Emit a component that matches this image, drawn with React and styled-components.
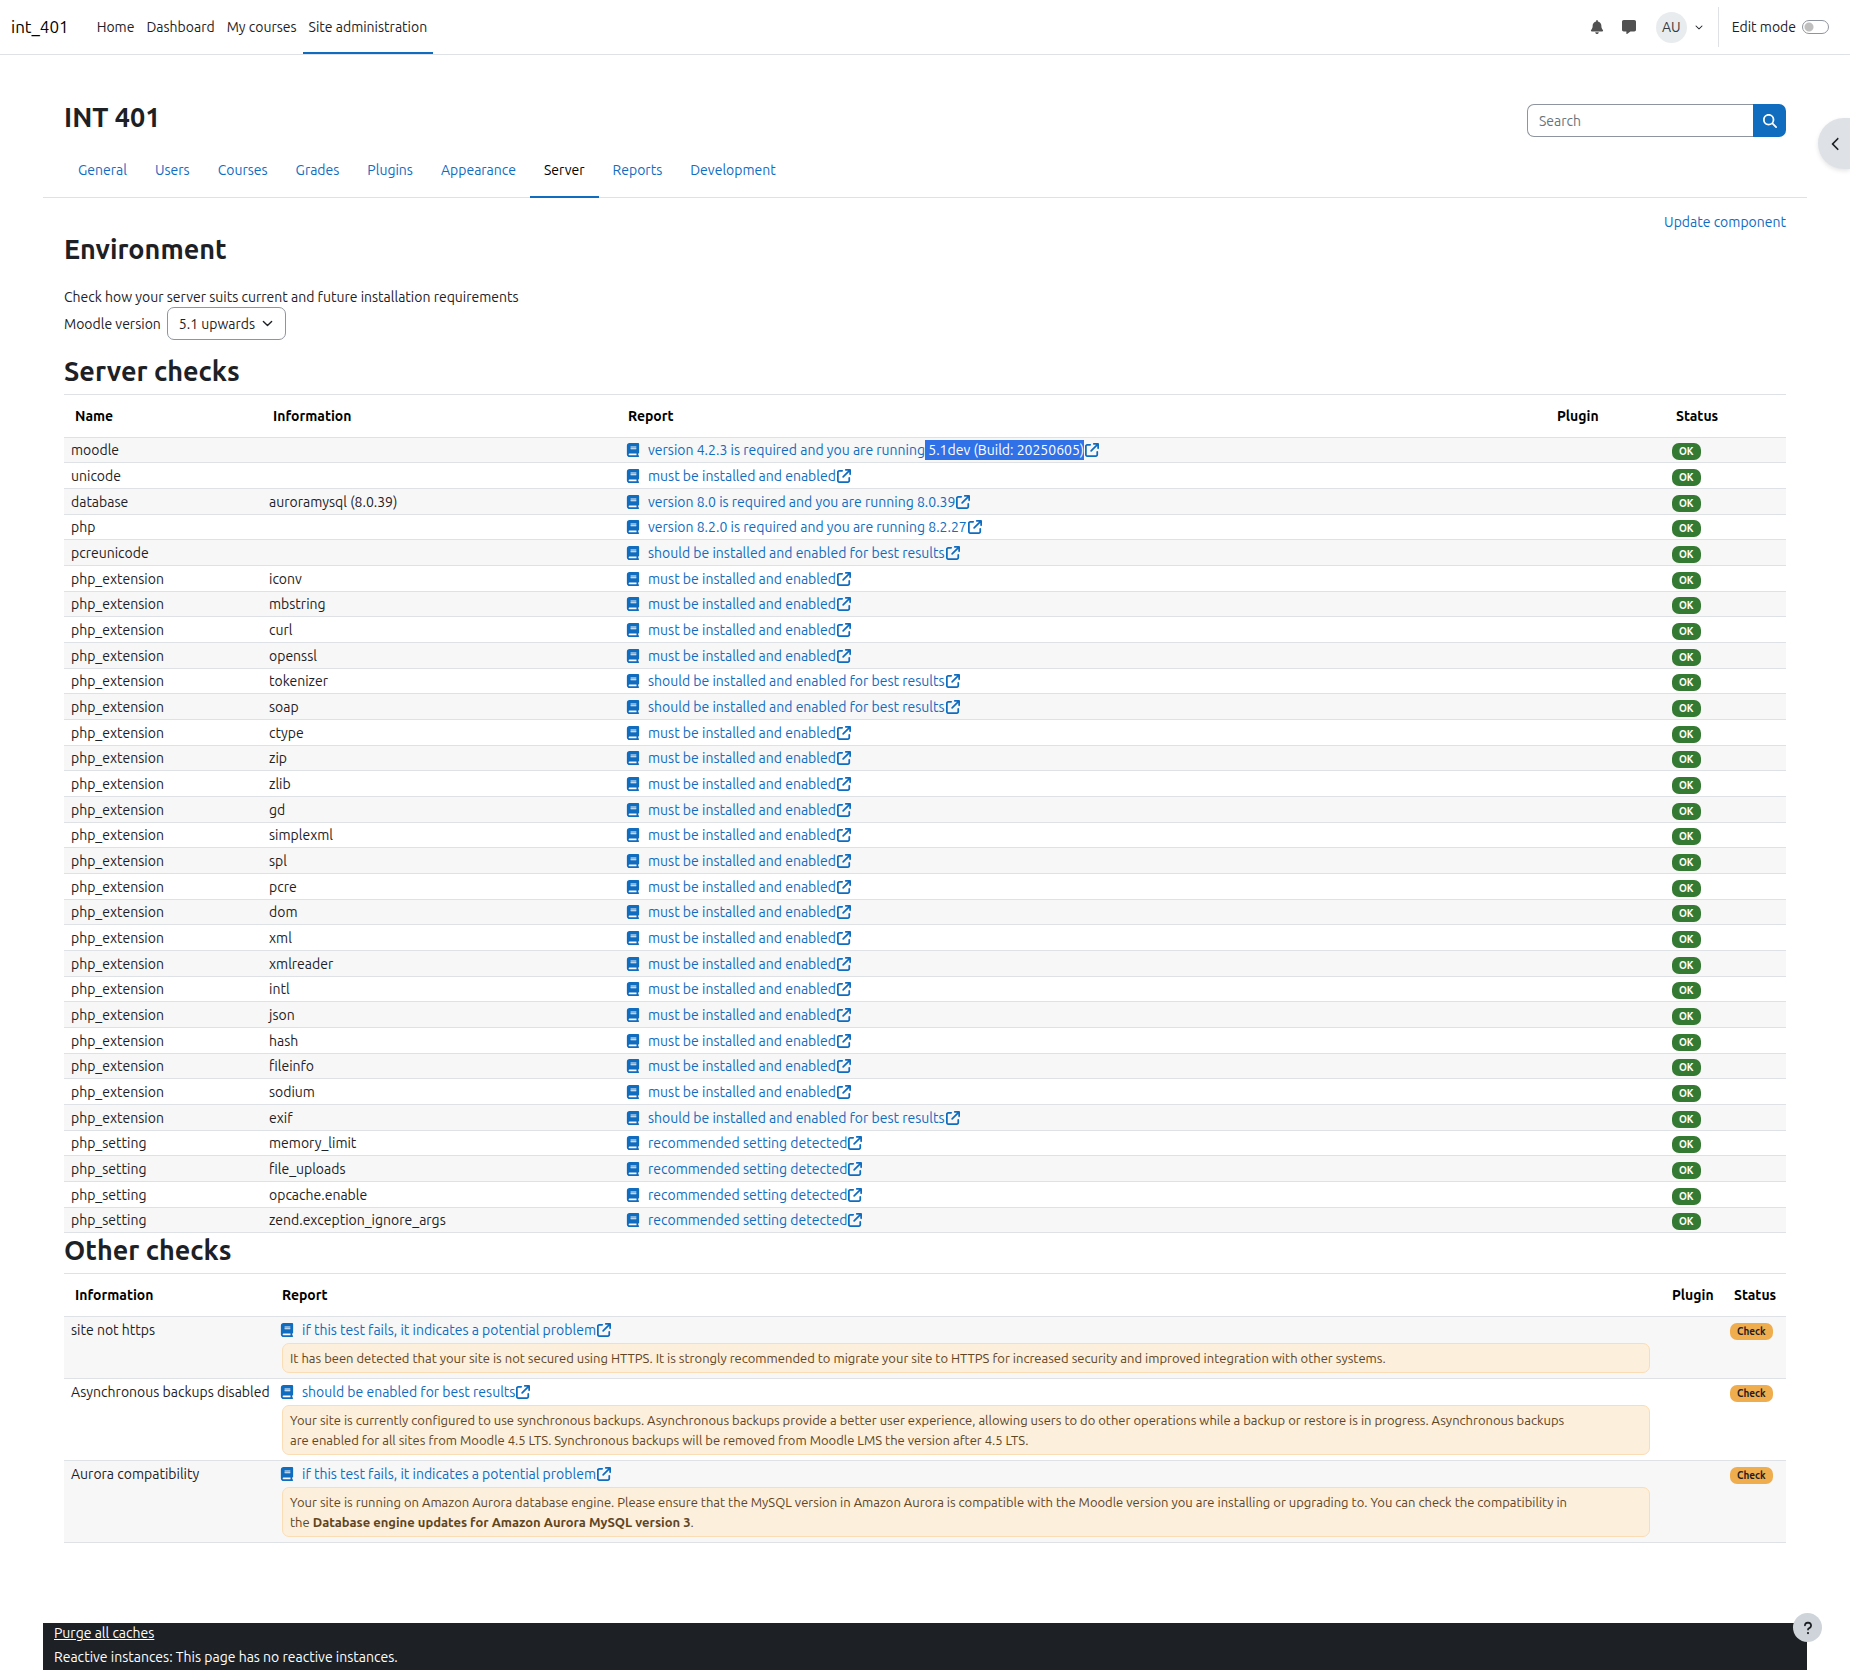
import React from 'react';
import styled, { createGlobalStyle } from 'styled-components';
import {
  FaArrowUpRightFromSquare,
  FaBell,
  FaBook,
  FaChevronDown,
  FaChevronLeft,
  FaMagnifyingGlass,
  FaMessage,
  FaQuestion,
} from 'react-icons/fa6';

const GlobalStyle = createGlobalStyle`
  * {
    box-sizing: border-box;
  }

  body {
    margin: 0;
    background: white;
    color: #1d2125;
    font-family: Ubuntu, "Noto Sans", "Open Sans", sans-serif;
    font-size: 14px;
    line-height: 20px;
  }

  button, input, select {
    font: inherit;
    color: inherit;
  }
`;

const Link = styled.a`
  color: #0f6cbf;
  text-decoration: none;
`;

const Navbar = styled.header`
  display: flex;
  align-items: stretch;
  height: 55px;
  padding: 0 21px 0 11px;
  border-bottom: 1px solid #dee2e6;
`;

const Brand = styled.a`
  align-self: center;
  margin-right: 22px;
  font-size: 17px;
  color: black;
  text-decoration: none;
`;

const PrimaryNav = styled.nav`
  display: flex;
`;

const PrimaryLink = styled.a`
  display: flex;
  align-items: center;
  padding: 2px 6px 0;
  border-bottom: 2px solid ${({ $active }) => ($active ? '#0f6cbf' : 'transparent')};
  color: #1d2125;
  text-decoration: none;
`;

const UserNav = styled.div`
  display: flex;
  align-items: center;
  margin-left: auto;
`;

const IconButton = styled.button`
  display: flex;
  justify-content: center;
  width: 32px;
  padding: 0;
  border: 0;
  background: none;
  color: #515151;
`;

const UserMenu = styled.button`
  display: flex;
  align-items: center;
  gap: 8px;
  margin: 0 15px 0 11px;
  padding: 0;
  border: 0;
  background: none;
`;

const Avatar = styled.span`
  width: 31px;
  border-radius: 50%;
  background: #e9ecef;
  color: #343a40;
  line-height: 31px;
  text-align: center;
`;

const EditMode = styled.label`
  display: flex;
  align-items: center;
  gap: 6px;
  height: 40px;
  padding-left: 13px;
  border-left: 1px solid #dee2e6;
`;

const Switch = styled.input`
  appearance: none;
  width: 27px;
  height: 14px;
  margin: 0;
  border: 1px solid #8f959e;
  border-radius: 7px;
  background: radial-gradient(circle at 6px 6px, #bfbfbf 4px, transparent 5px);
`;

const DrawerToggle = styled.button`
  position: absolute;
  top: 118px;
  right: 0;
  display: flex;
  align-items: center;
  width: 32px;
  height: 51px;
  padding: 0 0 0 11px;
  border: 0;
  border-radius: 26px 0 0 26px;
  background: #dee2e6;
  box-shadow: 0 2px 4px rgba(0, 0, 0, 0.1);
`;

const Page = styled.div`
  margin: 0 43px;
`;

const PageHeader = styled.div`
  display: flex;
  align-items: flex-start;
  justify-content: space-between;
  padding: 44px 21px 6px;
`;

const Title = styled.h1`
  margin: 0;
  font-size: 27px;
  font-weight: 700;
  line-height: 36px;
`;

const SearchForm = styled.form`
  display: flex;
  height: 33px;
  margin-top: 5px;
`;

const SearchInput = styled.input`
  width: 226px;
  padding: 0 11px;
  border: 1px solid #8f959e;
  border-right: 0;
  border-radius: 7px 0 0 7px;

  &::placeholder {
    color: #6a737b;
    opacity: 1;
  }
`;

const SearchButton = styled.button`
  display: flex;
  align-items: center;
  justify-content: center;
  width: 33px;
  padding: 0;
  border: 0;
  border-radius: 0 7px 7px 0;
  background: #0f6cbf;
  color: white;
`;

const Tabs = styled.nav`
  display: flex;
  height: 55px;
  padding: 0 21px;
  border-bottom: 1px solid #dee2e6;
`;

const Tab = styled(Link)`
  display: flex;
  align-items: center;
  height: 55px;
  padding: 0 14px;
  border-bottom: 2px solid ${({ $active }) => ($active ? '#0f6cbf' : 'transparent')};
  ${({ $active }) => $active && 'color: black;'}
`;

const Content = styled.main`
  padding: 14px 21px 80px;
`;

const Actions = styled.div`
  text-align: right;
`;

const Heading = styled.h2`
  margin: 0 0 6px;
  font-size: 27px;
  font-weight: 600;
  line-height: 34px;
`;

const Intro = styled.p`
  margin: 21px 0 0;
`;

const VersionForm = styled.form`
  display: flex;
  align-items: center;
  gap: 6px;
  margin-bottom: 14px;
`;

const SelectBox = styled.div`
  position: relative;

  svg {
    position: absolute;
    top: 11px;
    right: 13px;
    pointer-events: none;
  }
`;

const Select = styled.select`
  appearance: none;
  display: block;
  width: 119px;
  height: 33px;
  padding: 0 11px;
  border: 1px solid #8f959e;
  border-radius: 7px;
  background: white;
`;

const Table = styled.table`
  width: 100%;
  table-layout: fixed;
  border-spacing: 0;
  border-top: 1px solid #dee2e6;
`;

const HeadCell = styled.th`
  width: ${({ $width }) => $width || 'auto'};
  padding: 11px;
  border-bottom: 1px solid #dee2e6;
  color: black;
  font-weight: 700;
  text-align: left;
`;

const Cell = styled.td`
  padding: 3px 7px 2px;
  border-bottom: 1px solid #dee2e6;
  vertical-align: top;
  white-space: nowrap;
`;

const Row = styled.tr`
  background: ${({ $striped }) => ($striped ? '#f7f7f7' : 'white')};
`;

const ServerRow = styled(Row)`
  &:nth-child(3n + 1) ${Cell} {
    padding-top: 2px;
  }
`;

const Report = styled.div`
  display: flex;
  align-items: center;
`;

const DocIcon = styled(Link)`
  display: flex;
  justify-content: center;
  width: 18px;
  margin-right: 6px;
`;

const DocLink = styled(Link)`
  display: flex;
  align-items: center;
  gap: 1px;
  white-space: pre;
`;

const Selected = styled.span`
  padding: 2px 0;
  background: #3071e7;
  color: white;
`;

const Badge = styled.span`
  display: block;
  width: fit-content;
  margin-top: 3px;
  padding: 0 7px;
  border-radius: 7px;
  background: ${({ $warning }) => ($warning ? '#f0ad4e' : '#357a32')};
  color: ${({ $warning }) => ($warning ? '#1d2125' : 'white')};
  font-size: 10px;
  font-weight: 700;
  line-height: 17px;
`;

const Alert = styled.div`
  margin: 3px 4px;
  padding: 4px 74px 4px 7px;
  border: 1px solid #fbddb5;
  border-radius: 7px;
  background: #fcefdc;
  color: #60451f;
  font-size: 13px;
  white-space: normal;
`;

const Footer = styled.footer`
  position: relative;
  display: flex;
  flex-direction: column;
  gap: 4px;
  padding: 0 11px 3px;
  background: #1d2125;
  color: white;

  a {
    color: white;
    text-decoration: underline;
  }
`;

const HelpButton = styled.button`
  position: absolute;
  top: -10px;
  right: -15px;
  display: flex;
  align-items: center;
  justify-content: center;
  width: 29px;
  height: 29px;
  padding: 0;
  border: 0;
  border-radius: 50%;
  background: #ced4da;
  color: #1d2125;
`;

const tabs = ['General', 'Users', 'Courses', 'Grades', 'Plugins', 'Appearance', 'Server', 'Reports', 'Development'];

const MUST = 'must be installed and enabled';
const SHOULD = 'should be installed and enabled for best results';
const SETTING = 'recommended setting detected';

const serverChecks = [
  ['moodle', '', 'version 4.2.3 is required and you are running', ' 5.1dev (Build: 20250605)'],
  ['unicode', '', MUST],
  ['database', 'auroramysql (8.0.39)', 'version 8.0 is required and you are running 8.0.39'],
  ['php', '', 'version 8.2.0 is required and you are running 8.2.27'],
  ['pcreunicode', '', SHOULD],
  ['php_extension', 'iconv', MUST],
  ['php_extension', 'mbstring', MUST],
  ['php_extension', 'curl', MUST],
  ['php_extension', 'openssl', MUST],
  ['php_extension', 'tokenizer', SHOULD],
  ['php_extension', 'soap', SHOULD],
  ['php_extension', 'ctype', MUST],
  ['php_extension', 'zip', MUST],
  ['php_extension', 'zlib', MUST],
  ['php_extension', 'gd', MUST],
  ['php_extension', 'simplexml', MUST],
  ['php_extension', 'spl', MUST],
  ['php_extension', 'pcre', MUST],
  ['php_extension', 'dom', MUST],
  ['php_extension', 'xml', MUST],
  ['php_extension', 'xmlreader', MUST],
  ['php_extension', 'intl', MUST],
  ['php_extension', 'json', MUST],
  ['php_extension', 'hash', MUST],
  ['php_extension', 'fileinfo', MUST],
  ['php_extension', 'sodium', MUST],
  ['php_extension', 'exif', SHOULD],
  ['php_setting', 'memory_limit', SETTING],
  ['php_setting', 'file_uploads', SETTING],
  ['php_setting', 'opcache.enable', SETTING],
  ['php_setting', 'zend.exception_ignore_args', SETTING],
];

const otherChecks = [
  {
    info: 'site not https',
    report: 'if this test fails, it indicates a potential problem',
    feedback: 'It has been detected that your site is not secured using HTTPS. It is strongly recommended to migrate your site to HTTPS for increased security and improved integration with other systems.',
  },
  {
    info: 'Asynchronous backups disabled',
    report: 'should be enabled for best results',
    feedback: 'Your site is currently configured to use synchronous backups. Asynchronous backups provide a better user experience, allowing users to do other operations while a backup or restore is in progress. Asynchronous backups are enabled for all sites from Moodle 4.5 LTS. Synchronous backups will be removed from Moodle LMS the version after 4.5 LTS.',
  },
  {
    info: 'Aurora compatibility',
    report: 'if this test fails, it indicates a potential problem',
    feedback: (
      <>
        Your site is running on Amazon Aurora database engine. Please ensure that the MySQL version in Amazon Aurora is compatible with the Moodle version you are installing or upgrading to. You can check the compatibility in the <strong>Database engine updates for Amazon Aurora MySQL version 3</strong>.
      </>
    ),
  },
];

const SelectArrow = () => (
  <svg width="11" height="11" viewBox="0 0 16 16" aria-hidden="true">
    <path d="m2 5 6 6 6-6" fill="none" stroke="#1d2125" strokeWidth="2" strokeLinecap="round" strokeLinejoin="round" />
  </svg>
);

const ReportLink = ({ text, selected }) => (
  <Report>
    <DocIcon href="#docs" aria-label="Docs"><FaBook size={14} /></DocIcon>
    <DocLink href="#docs">
      <span>
        {text}
        {selected && <Selected>{selected}</Selected>}
      </span>
      <FaArrowUpRightFromSquare size={14} />
    </DocLink>
  </Report>
);

const App = () => (
  <>
    <GlobalStyle />
    <Navbar>
      <Brand href="#home">int_401</Brand>
      <PrimaryNav>
        <PrimaryLink href="#home">Home</PrimaryLink>
        <PrimaryLink href="#dashboard">Dashboard</PrimaryLink>
        <PrimaryLink href="#courses">My courses</PrimaryLink>
        <PrimaryLink href="#admin" $active>Site administration</PrimaryLink>
      </PrimaryNav>
      <UserNav>
        <IconButton aria-label="Notifications"><FaBell size={14} /></IconButton>
        <IconButton aria-label="Messages"><FaMessage size={14} /></IconButton>
        <UserMenu aria-label="User menu">
          <Avatar>AU</Avatar>
          <FaChevronDown size={8} />
        </UserMenu>
        <EditMode>
          Edit mode
          <Switch type="checkbox" />
        </EditMode>
      </UserNav>
    </Navbar>
    <DrawerToggle aria-label="Open block drawer"><FaChevronLeft size={14} /></DrawerToggle>
    <Page>
      <PageHeader>
        <Title>INT 401</Title>
        <SearchForm>
          <SearchInput type="text" placeholder="Search" aria-label="Search" />
          <SearchButton type="button" aria-label="Search"><FaMagnifyingGlass size={14} /></SearchButton>
        </SearchForm>
      </PageHeader>
      <Tabs>
        {tabs.map((name) => (
          <Tab key={name} href={`#${name}`} $active={name === 'Server'}>{name}</Tab>
        ))}
      </Tabs>
      <Content>
        <Actions><Link href="#update">Update component</Link></Actions>
        <Heading>Environment</Heading>
        <Intro>Check how your server suits current and future installation requirements</Intro>
        <VersionForm>
          <label htmlFor="version">Moodle version</label>
          <SelectBox>
            <Select id="version">
              <option>5.1 upwards</option>
            </Select>
            <SelectArrow />
          </SelectBox>
        </VersionForm>
        <Heading>Server checks</Heading>
        <Table>
          <thead>
            <tr>
              <HeadCell $width="198px">Name</HeadCell>
              <HeadCell $width="355px">Information</HeadCell>
              <HeadCell>Report</HeadCell>
              <HeadCell $width="119px">Plugin</HeadCell>
              <HeadCell $width="121px">Status</HeadCell>
            </tr>
          </thead>
          <tbody>
            {serverChecks.map(([name, info, report, selected], i) => (
              <ServerRow key={`${name}-${info}`} $striped={i % 2 === 0}>
                <Cell>{name}</Cell>
                <Cell>{info}</Cell>
                <Cell><ReportLink text={report} selected={selected} /></Cell>
                <Cell />
                <Cell><Badge>OK</Badge></Cell>
              </ServerRow>
            ))}
          </tbody>
        </Table>
        <Heading>Other checks</Heading>
        <Table>
          <thead>
            <tr>
              <HeadCell $width="207px">Information</HeadCell>
              <HeadCell>Report</HeadCell>
              <HeadCell $width="62px">Plugin</HeadCell>
              <HeadCell $width="63px">Status</HeadCell>
            </tr>
          </thead>
          <tbody>
            {otherChecks.map(({ info, report, feedback }, i) => (
              <Row key={info} $striped={i % 2 === 0}>
                <Cell>{info}</Cell>
                <Cell>
                  <ReportLink text={report} />
                  <Alert>{feedback}</Alert>
                </Cell>
                <Cell />
                <Cell><Badge $warning>Check</Badge></Cell>
              </Row>
            ))}
          </tbody>
        </Table>
      </Content>
      <Footer>
        <div><a href="#purge">Purge all caches</a></div>
        <div>Reactive instances: This page has no reactive instances.</div>
        <HelpButton aria-label="Help"><FaQuestion size={14} /></HelpButton>
      </Footer>
    </Page>
  </>
);

export default App;
